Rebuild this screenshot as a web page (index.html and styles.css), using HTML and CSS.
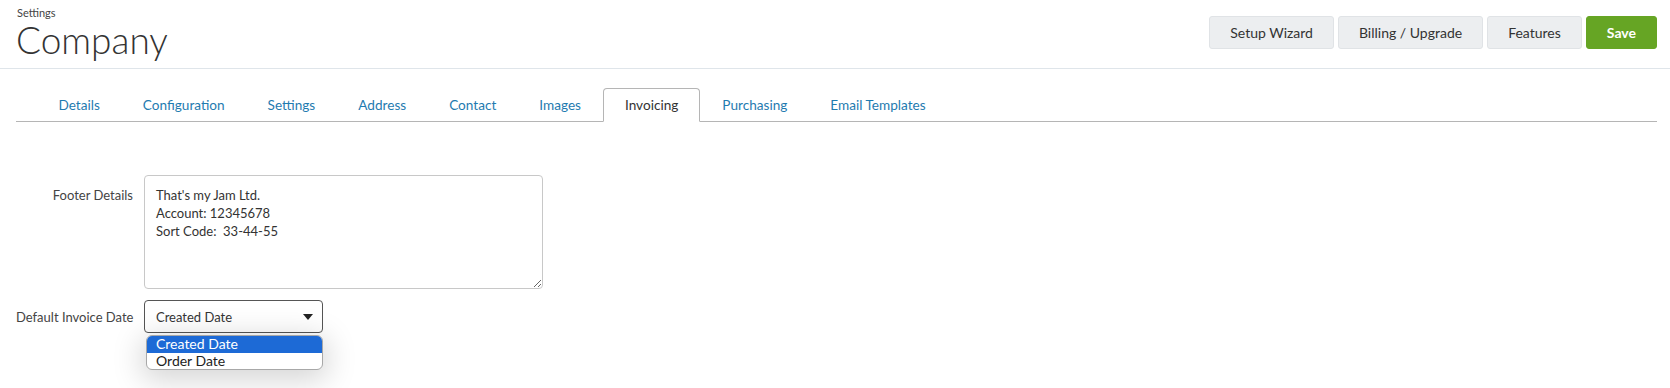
FILE: index.html
```html
<!DOCTYPE html>
<html lang="en">
<head>
    <meta charset="UTF-8">
    <meta name="viewport" content="width=device-width, initial-scale=1.0">
    <title>Company Settings</title>
    <link rel="stylesheet" href="styles.css">
</head>
<body>

<div class="page-header">
    <div class="title-block">
        <div class="crumb">Settings</div>
        <h1>Company</h1>
    </div>
    <div class="header-actions">
        <button class="btn">Setup Wizard</button>
        <button class="btn">Billing / Upgrade</button>
        <button class="btn">Features</button>
        <button class="btn btn-save">Save</button>
    </div>
</div>

<ul class="tabs">
    <li><a href="#">Details</a></li>
    <li><a href="#">Configuration</a></li>
    <li><a href="#">Settings</a></li>
    <li><a href="#">Address</a></li>
    <li><a href="#">Contact</a></li>
    <li><a href="#">Images</a></li>
    <li class="active"><a href="#">Invoicing</a></li>
    <li><a href="#">Purchasing</a></li>
    <li><a href="#">Email Templates</a></li>
</ul>

<div class="form-grid">
    <label class="form-label label-area" for="footerDetails">Footer Details</label>
    <textarea id="footerDetails" class="footer-text">That's my Jam Ltd.
Account: 12345678
Sort Code:  33-44-55</textarea>

    <label class="form-label label-select" for="invoiceDate">Default Invoice Date</label>
    <div class="select-wrap">
        <div class="select-box">
            <span>Created Date</span>
            <svg class="caret" width="10" height="6" viewBox="0 0 10 6"><path d="M0 0h10L5 6z" fill="#222"/></svg>
        </div>
        <!-- open option list -->
        <div class="menu">
            <div class="menu-item highlight">Created Date</div>
            <div class="menu-item">Order Date</div>
        </div>
    </div>
</div>

</body>
</html>
```

FILE: styles.css
```css
body {
    margin: 0;
    min-height: 100vh;
    font-family: Lato, "Open Sans", Arial, sans-serif;
    color: #333;
    background-color: white;
}
.page-header {
    display: flex;
    justify-content: space-between;
    align-items: flex-start;
    height: 68px;
    padding: 0 13px 0 16px;
    border-bottom: 1px solid #dfe5ea;
}
.title-block {
    padding-top: 6px;
}
.crumb {
    font-size: 11px;
    line-height: 14px;
    color: #444;
    padding-left: 1px;
}
.title-block h1 {
    margin: 0;
    margin-top: -2px;
    font-size: 37px;
    font-weight: 300;
    line-height: 44px;
    color: #333;
}
.header-actions {
    display: flex;
    gap: 4px;
    padding-top: 16px;
}
.btn {
    height: 33px;
    padding: 0 20px;
    border: 1px solid #e0e3e6;
    border-radius: 3px;
    background-color: #eceef0;
    font-family: inherit;
    font-size: 14px;
    color: #333;
    cursor: pointer;
}
.btn-save {
    background-color: #66a524;
    border-color: #66a524;
    color: white;
    font-weight: bold;
}
.tabs {
    display: flex;
    list-style: none;
    margin: 19px 13px 0 16px;
    padding: 0 0 0 21px;
    border-bottom: 1px solid #b5b5b5;
}
.tabs li {
    margin-bottom: -1px;
    border: 1px solid transparent;
    border-radius: 4px 4px 0 0;
}
.tabs li a {
    display: block;
    padding: 0 20.5px;
    line-height: 32px;
    font-size: 13.6px;
    color: #1f7bb0;
    text-decoration: none;
}
.tabs li.active {
    margin: 0 1px -1px 1px;
    border-color: #b5b5b5;
    border-bottom-color: white;
    background-color: white;
}
.tabs li.active a {
    color: #333;
}
.form-grid {
    display: grid;
    grid-template-columns: 117px auto;
    column-gap: 11px;
    row-gap: 11px;
    justify-content: start;
    align-items: start;
    margin-top: 53px;
    padding: 0 0 30px 16px;
}
.form-label {
    font-size: 13px;
    line-height: 18px;
    color: #444;
    text-align: right;
    white-space: nowrap;
}
.label-area {
    padding-top: 11px;
}
.label-select {
    padding-top: 8px;
}
.footer-text {
    box-sizing: border-box;
    display: block;
    width: 399px;
    height: 114px;
    padding: 10px 11px;
    border: 1px solid #c8c8c8;
    border-radius: 4px;
    font-family: inherit;
    font-size: 13px;
    line-height: 18px;
    color: #333;
}
.select-wrap {
    width: 179px;
}
.select-box {
    box-sizing: border-box;
    display: flex;
    justify-content: space-between;
    align-items: center;
    height: 33px;
    padding: 0 9px 0 11px;
    border: 1px solid #555;
    border-radius: 4px;
    background-color: white;
    font-size: 13px;
    color: #333;
}
.menu {
    margin: 2px 0 0 2px;
    border: 1px solid #a8a8a8;
    border-radius: 6px;
    overflow: hidden;
    background-color: white;
    box-shadow: 0 6px 30px 4px rgba(0, 0, 0, 0.17);
}
.menu-item {
    padding: 0 9px;
    font-size: 14px;
    line-height: 16.5px;
    color: #222;
}
.menu-item.highlight {
    background-color: #1d6ad6;
    color: white;
}
```
